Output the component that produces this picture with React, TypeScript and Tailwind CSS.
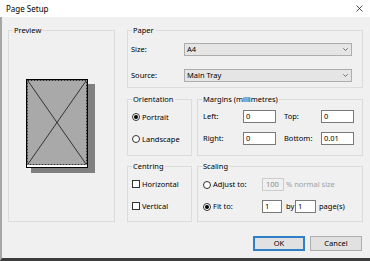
import type { ReactNode } from 'react';

const Group = ({ label, className, children }: { label: string; className: string; children?: ReactNode }) => (
  <div className={`relative border border-[#dcdcdc] ${className}`}>
    <span className="absolute -top-[6px] left-[4px] bg-[#f0f0f0] px-px leading-[11px]">{label}</span>
    {children}
  </div>
);

const Radio = ({ checked }: { checked?: boolean }) => (
  <span className="flex h-[8px] w-[8px] shrink-0 items-center justify-center rounded-full border border-[#333] bg-white">
    {checked && <span className="h-[4px] w-[4px] rounded-full bg-black" />}
  </span>
);

const Check = () => <span className="h-[8px] w-[8px] shrink-0 border border-[#333] bg-white" />;

const Input = ({ value, className }: { value: string; className: string }) => (
  <div className={`flex h-[13px] items-center border border-[#7a7a7a] bg-white pl-[2px] ${className}`}>{value}</div>
);

const Select = ({ value }: { value: string }) => (
  <div className="flex h-[13px] w-[168px] items-center justify-between border border-[#adadad] bg-[#e5e5e5] pl-[2px] pr-[3px]">
    <span>{value}</span>
    <svg width="5" height="3" viewBox="0 0 5 3">
      <path d="M0.3 0.3 L2.5 2.5 L4.7 0.3" fill="none" stroke="#555" strokeWidth="0.8" />
    </svg>
  </div>
);

export default function App() {
  return (
    <div className="flex h-[261px] w-[370px] flex-col bg-[#f0f0f0] font-['Noto_Sans',sans-serif] text-[7.5px] leading-[11px] text-black">
      {/* title bar */}
      <div className="flex h-[17px] items-center justify-between bg-white pl-[6px] pr-[7px]">
        <span className="text-[8px]">Page Setup</span>
        <svg width="7" height="7" viewBox="0 0 7 7">
          <path d="M0.5 0.5 L6.5 6.5 M6.5 0.5 L0.5 6.5" stroke="#222" strokeWidth="0.8" />
        </svg>
      </div>

      <div className="flex flex-1 flex-col border-b-[3px] border-l-2 border-b-[#3c3c3c] border-l-[#a6a6a6] pl-[6px] pr-[7px] pt-[13px]">
        <div className="flex h-[192px] gap-[12px]">
          <Group label="Preview" className="flex w-[107px] items-center justify-center pr-[2px]">
            <svg width="70" height="95" viewBox="0 0 70 95">
              <rect x="5" y="5" width="64" height="89" fill="#808080" />
              <rect x="0.5" y="0.5" width="61" height="88" fill="#fff" stroke="#000" />
              <rect x="1.5" y="1.5" width="59" height="84" fill="#a9a9a9" stroke="#000" strokeWidth="0.8" strokeDasharray="2 1" />
              <path d="M2 2 L60 85 M60 2 L2 85" stroke="#000" strokeWidth="0.7" />
            </svg>
          </Group>

          <div className="flex flex-1 flex-col">
            <Group label="Paper" className="flex h-[58px] flex-col gap-[13px] pl-[3px] pt-[12px]">
              <div className="flex h-[13px] items-center">
                <span className="w-[53px]">Size:</span>
                <Select value="A4" />
              </div>
              <div className="flex h-[13px] items-center">
                <span className="w-[53px]">Source:</span>
                <Select value="Main Tray" />
              </div>
            </Group>

            <div className="mt-[11px] flex h-[57px] gap-[5px]">
              <Group label="Orientation" className="flex w-[65px] flex-col gap-[14px] pl-[4px] pt-[13px]">
                <div className="flex h-[8px] items-center gap-[2px]">
                  <Radio checked />
                  <span>Portrait</span>
                </div>
                <div className="flex h-[8px] items-center gap-[2px]">
                  <Radio />
                  <span>Landscape</span>
                </div>
              </Group>
              <Group label="Margins (millimetres)" className="flex flex-1 flex-col gap-[9px] pl-[5px] pt-[10px]">
                <div className="flex h-[13px] items-center">
                  <span className="w-[40px]">Left:</span>
                  <Input value="0" className="w-[33px]" />
                  <span className="ml-[8px] w-[37px]">Top:</span>
                  <Input value="0" className="w-[33px]" />
                </div>
                <div className="flex h-[13px] items-center">
                  <span className="w-[40px]">Right:</span>
                  <Input value="0" className="w-[33px]" />
                  <span className="ml-[8px] w-[37px]">Bottom:</span>
                  <Input value="0.01" className="w-[33px]" />
                </div>
              </Group>
            </div>

            <div className="mt-[10px] flex h-[56px] gap-[5px]">
              <Group label="Centring" className="flex w-[65px] flex-col gap-[14px] pl-[4px] pt-[13px]">
                <div className="flex h-[8px] items-center gap-[2px]">
                  <Check />
                  <span>Horizontal</span>
                </div>
                <div className="flex h-[8px] items-center gap-[2px]">
                  <Check />
                  <span>Vertical</span>
                </div>
              </Group>
              <Group label="Scaling" className="flex flex-1 flex-col gap-[9px] pl-[5px] pt-[11px]">
                <div className="flex h-[13px] items-center">
                  <div className="flex w-[59px] items-center gap-[2px]">
                    <Radio />
                    <span>Adjust to:</span>
                  </div>
                  <div className="flex h-[13px] w-[22px] items-center border border-[#cccccc] bg-[#f0f0f0] pl-[3px] text-[#8a8a8a]">100</div>
                  <span className="ml-[2px] text-[#a0a0a0]">% normal size</span>
                </div>
                <div className="flex h-[13px] items-center">
                  <div className="flex w-[59px] items-center gap-[2px]">
                    <Radio checked />
                    <span>Fit to:</span>
                  </div>
                  <Input value="1" className="w-[20px]" />
                  <span className="ml-[4px] w-[9px]">by</span>
                  <Input value="1" className="w-[21px]" />
                  <span className="ml-[3px]">page(s)</span>
                </div>
              </Group>
            </div>
          </div>
        </div>

        <div className="mt-[14px] flex justify-end gap-[5px] pr-px">
          <button className="flex h-[15px] w-[52px] items-center justify-center border-2 border-[#2f7fc9] bg-[#e1e1e1]">OK</button>
          <button className="flex h-[15px] w-[52px] items-center justify-center border border-[#adadad] bg-[#e1e1e1]">Cancel</button>
        </div>
      </div>
    </div>
  );
}
